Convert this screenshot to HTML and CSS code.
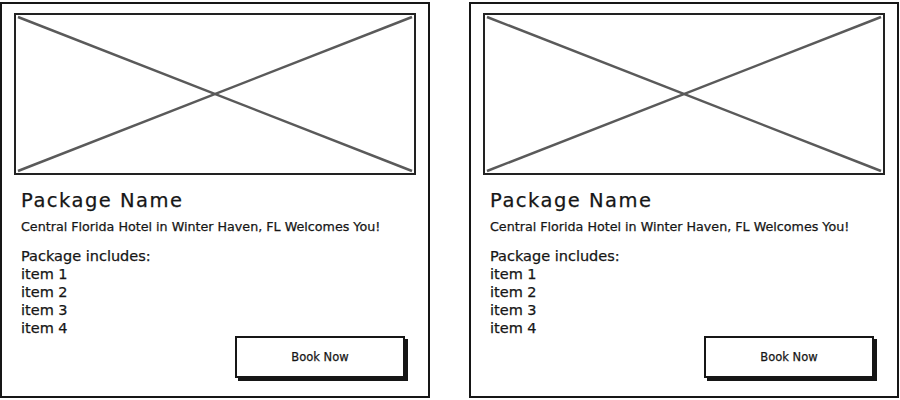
FILE: index.html
```html
<!DOCTYPE html>
<html lang="en">
<head>
<meta charset="utf-8" />
<title>Packages</title>
<link rel="stylesheet" href="styles.css">
</head>
<body>
<main class="packages">
  <article class="package-card">
    <div class="package-photo">
      <svg viewBox="0 0 400 158" preserveAspectRatio="none"><line x1="2" y1="2" x2="398" y2="156"/><line x1="2" y1="156" x2="398" y2="2"/></svg>
    </div>
    <div class="package-body">
      <h2 class="package-name">Package Name</h2>
      <p class="package-tagline">Central Florida Hotel in Winter Haven, FL Welcomes You!</p>
      <div class="package-includes">
        <p>Package includes:</p>
        <ul>
          <li>item 1</li>
          <li>item 2</li>
          <li>item 3</li>
          <li>item 4</li>
        </ul>
      </div>
      <div class="package-actions"><button class="book-btn">Book Now</button></div>
    </div>
  </article>
  <article class="package-card">
    <div class="package-photo">
      <svg viewBox="0 0 400 158" preserveAspectRatio="none"><line x1="2" y1="2" x2="398" y2="156"/><line x1="2" y1="156" x2="398" y2="2"/></svg>
    </div>
    <div class="package-body">
      <h2 class="package-name">Package Name</h2>
      <p class="package-tagline">Central Florida Hotel in Winter Haven, FL Welcomes You!</p>
      <div class="package-includes">
        <p>Package includes:</p>
        <ul>
          <li>item 1</li>
          <li>item 2</li>
          <li>item 3</li>
          <li>item 4</li>
        </ul>
      </div>
      <div class="package-actions"><button class="book-btn">Book Now</button></div>
    </div>
  </article>
</main>
</body>
</html>
```
FILE: styles.css
```css
:root {
  --ink: #161616;
  --cross: #5a5a5a;
}
*{box-sizing:border-box;}
body{
  margin:0;
  padding-top:2px;
  background:#fff;
  color:var(--ink);
  font-family:'DejaVu Sans',sans-serif;
  -webkit-text-stroke:0.25px var(--ink);
}
.packages{display:flex;gap:39px;}
.package-card{
  width:430px;
  height:396px;
  border:2px solid var(--ink);
  padding:9px 12px 0 12px;
}
.package-photo{height:162px;border:2px solid #222;}
.package-photo svg{display:block;width:100%;height:100%;}
.package-photo line{stroke:var(--cross);stroke-width:2.5;}
.package-body{padding-left:7px;}
.package-name{font-size:19.5px;font-weight:400;letter-spacing:1.5px;margin:14px 0 0;line-height:24px;}
.package-tagline{font-size:12.7px;margin:6px 0 0;line-height:16px;}
.package-includes{font-size:14.5px;line-height:18px;margin-top:12px;}
.package-includes p{margin:0;}
.package-includes ul{list-style:none;margin:0;padding:0;}
.package-actions{display:flex;justify-content:flex-end;padding-right:11px;margin-top:-1px;}
.book-btn{
  width:170px;
  height:42px;
  background:#fff;
  border:2px solid var(--ink);
  box-shadow:3px 3px 0 var(--ink);
  font-family:'DejaVu Sans',sans-serif;
  font-size:11.5px;
  color:var(--ink);
  padding:0;
}
```
